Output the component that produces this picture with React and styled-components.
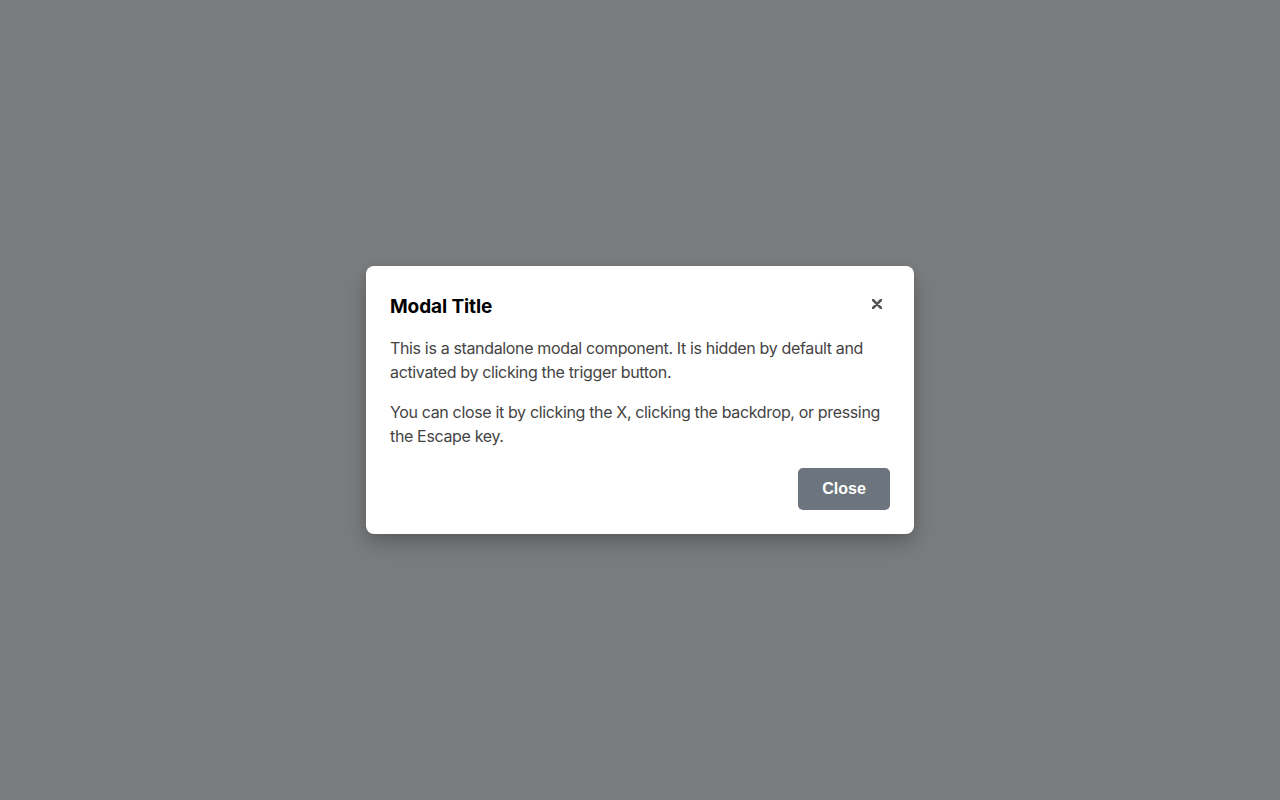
import React from "react";
import styled, { createGlobalStyle } from "styled-components";

const GlobalStyle = createGlobalStyle`
  html, body { margin: 0; padding: 0; height: 100%; }
  body { font-family: Inter, "Noto Sans", sans-serif; background: #f4f4f5; }
  #root { height: 100%; }
`;

const Backdrop = styled.div`
  position: fixed;
  inset: 0;
  background: #7b7c7e;
  display: flex;
  align-items: center;
  justify-content: center;
`;

const Dialog = styled.div`
  box-sizing: border-box;
  width: 548px;
  padding: 24px;
  background: #ffffff;
  border-radius: 8px;
  box-shadow: 0 10px 25px rgba(0, 0, 0, 0.2), 0 4px 10px rgba(0, 0, 0, 0.1);
`;

const Header = styled.div`
  display: flex;
  align-items: center;
  justify-content: space-between;
  height: 33px;
  margin-bottom: 13px;
`;

const Title = styled.h2`
  margin: 0;
  font-family: Inter, sans-serif;
  font-size: 19px;
  font-weight: 700;
  line-height: 33px;
  color: #000;
  letter-spacing: -0.1px;
`;

const IconButton = styled.button`
  border: none;
  background: none;
  padding: 4px;
  margin-right: 4px;
  margin-top: -5px;
  display: flex;
  align-items: center;
  justify-content: center;
  cursor: pointer;
  color: #555;
`;

const Text = styled.p`
  margin: 0 0 16px;
  font-family: Inter, sans-serif;
  font-size: 16px;
  line-height: 24px;
  letter-spacing: -0.35px;
  color: #444;
  &:last-of-type { margin-bottom: 0; }
`;

const Footer = styled.div`
  display: flex;
  justify-content: flex-end;
  margin-top: 20px;
`;

const Button = styled.button`
  width: 92px;
  height: 42px;
  border: none;
  border-radius: 5px;
  background: #6c757d;
  color: #fff;
  font-family: "Liberation Sans", Arial, sans-serif;
  font-weight: 700;
  font-size: 16px;
  cursor: pointer;
`;

export default function App() {
  return (
    <>
      <GlobalStyle />
      <Backdrop>
        <Dialog role="dialog" aria-modal="true">
          <Header>
            <Title>Modal Title</Title>
            <IconButton aria-label="Close">
              <svg width="10" height="10" viewBox="0 0 10 10">
                <path d="M1 1 L9 9 M9 1 L1 9" stroke="currentColor" strokeWidth="2.5" strokeLinecap="round" />
              </svg>
            </IconButton>
          </Header>
          <Text>
            This is a standalone modal component. It is hidden by default and activated by clicking the trigger button.
          </Text>
          <Text>
            You can close it by clicking the X, clicking the backdrop, or pressing the Escape key.
          </Text>
          <Footer>
            <Button>Close</Button>
          </Footer>
        </Dialog>
      </Backdrop>
    </>
  );
}
